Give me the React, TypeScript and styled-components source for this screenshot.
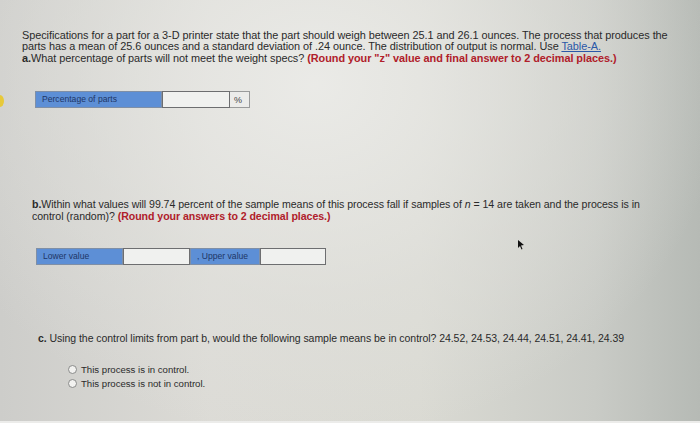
import React from "react";
import styled, { createGlobalStyle } from "styled-components";

const GlobalStyle = createGlobalStyle`
  html, body {
    margin: 0;
    padding: 0;
  }
  body {
    font-family: "Liberation Sans", Arial, sans-serif;
  }
`;

const Page = styled.div`
  position: relative;
  width: 700px;
  height: 423px;
  overflow: hidden;
  box-sizing: border-box;
  padding: 30px 0 0 22px;
  color: #2a2a2a;
  background:
    radial-gradient(ellipse at 45% 20%, rgba(236, 236, 233, 0.9) 0%, rgba(226, 226, 222, 0.5) 45%, rgba(0, 0, 0, 0) 75%),
    linear-gradient(90deg, #cdcdca 0%, #dcdbd6 30%, #dadad3 60%, #c9cbc6 85%, #b6bab5 100%);
  border-bottom: 2px solid #ececea;
`;

const Paragraph = styled.p<{ $indent?: number; $size?: number; $top?: number }>`
  margin: ${(p) => p.$top ?? 0}px 0 0 0;
  padding-left: ${(p) => p.$indent ?? 0}px;
  font-size: ${(p) => p.$size ?? 10.6}px;
  line-height: 11.4px;
  letter-spacing: -0.05px;
`;

const Strong = styled.b`
  font-weight: bold;
`;

const Hint = styled.b`
  color: #b0202a;
  font-weight: bold;
`;

const TableLink = styled.a`
  color: #2a58a8;
  text-decoration: underline;
`;

const AnswerRow = styled.div<{ $top: number; $left: number }>`
  display: flex;
  align-items: stretch;
  height: 17px;
  margin-top: ${(p) => p.$top}px;
  margin-left: ${(p) => p.$left}px;
`;

const Label = styled.div<{ $width: number }>`
  width: ${(p) => p.$width}px;
  box-sizing: border-box;
  background: #5d8fd6;
  border: 1px solid #7f8fa6;
  color: #1d3666;
  font-size: 8.6px;
  padding: 2px 0 0 6px;
  white-space: nowrap;
`;

const Input = styled.div<{ $width: number }>`
  width: ${(p) => p.$width}px;
  box-sizing: border-box;
  background: #f0f1ef;
  border: 1.5px solid #6d6e70;
  border-left-width: 1px;
`;

const Unit = styled.div`
  width: 20px;
  box-sizing: border-box;
  background: #ececea;
  border: 1px solid #9a9b9b;
  border-left: none;
  font-size: 9px;
  color: #444;
  padding: 3px 0 0 4px;
`;

const RadioList = styled.div`
  display: flex;
  flex-direction: column;
  gap: 3px;
  margin: 20px 0 0 46px;
`;

const RadioRow = styled.label`
  display: flex;
  align-items: center;
  gap: 4px;
  font-size: 9.6px;
  color: #2b2b2b;
`;

const Radio = styled.span`
  width: 7px;
  height: 7px;
  border-radius: 50%;
  border: 1px solid #8a8b8a;
  background: #f2f2f0;
`;

const Tab = styled.span`
  position: absolute;
  left: -4px;
  top: 95px;
  width: 8px;
  height: 12px;
  border-radius: 50%;
  background: #e7c93a;
`;

const Cursor = styled.svg`
  position: absolute;
  left: 517px;
  top: 240px;
`;

const App = () => (
  <>
    <GlobalStyle />
    <Page>
      <Tab />
      <Paragraph $size={10.9}>
        Specifications for a part for a 3-D printer state that the part should weigh between 25.1 and 26.1 ounces. The process that produces the
        <br />
        parts has a mean of 25.6 ounces and a standard deviation of .24 ounce. The distribution of output is normal. Use <TableLink>Table-A.</TableLink>
        <br />
        <Strong>a.</Strong>What percentage of parts will not meet the weight specs?{" "}
        <Hint>(Round your "z" value and final answer to 2 decimal places.)</Hint>
      </Paragraph>

      <AnswerRow $top={27} $left={13}>
        <Label $width={127}>Percentage of parts</Label>
        <Input $width={68} />
        <Unit>%</Unit>
      </AnswerRow>

      <Paragraph $indent={10} $top={91}>
        <Strong>b.</Strong>Within what values will 99.74 percent of the sample means of this process fall if samples of <i>n</i> = 14 are taken and the process is in
        <br />
        control (random)? <Hint>(Round your answers to 2 decimal places.)</Hint>
      </Paragraph>

      <AnswerRow $top={26} $left={14}>
        <Label $width={87}>Lower value</Label>
        <Input $width={67} />
        <Label $width={70}>, Upper value</Label>
        <Input $width={66} />
      </AnswerRow>

      <Paragraph $indent={16} $size={10.5} $top={68}>
        <Strong>c.</Strong> Using the control limits from part b, would the following sample means be in control? 24.52, 24.53, 24.44, 24.51, 24.41, 24.39
      </Paragraph>

      <RadioList>
        <RadioRow>
          <Radio />
          This process is in control.
        </RadioRow>
        <RadioRow>
          <Radio />
          This process is not in control.
        </RadioRow>
      </RadioList>

      <Cursor width="8" height="10" viewBox="0 0 8 10">
        <path d="M1 0 L7 5 L4 5.5 L5.5 9 L4.5 9.5 L3 6 L1 8 Z" fill="#111" />
      </Cursor>
    </Page>
  </>
);

export default App;
